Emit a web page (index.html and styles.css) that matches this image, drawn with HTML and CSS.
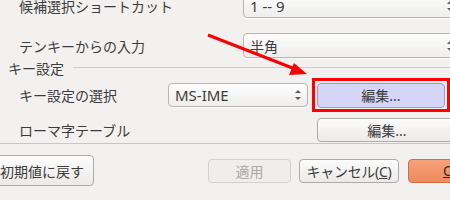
FILE: index.html
```html
<!DOCTYPE html>
<html lang="ja">

<head>
    <meta charset="UTF-8">
    <title>Mozc 設定</title>
    <link rel="stylesheet" href="styles.css">
</head>

<body>
    <div class="prefs">
        <div class="row wide first">
            <span class="label">候補選択ショートカット</span>
            <div class="combo long"><span class="latin">1 -- 9</span><i class="spin"></i></div>
        </div>
        <div class="row wide">
            <span class="label">テンキーからの入力</span>
            <div class="combo long"><span>半角</span><i class="spin"></i></div>
        </div>

        <div class="section-title">
            <span>キー設定</span>
            <div class="rule"></div>
        </div>

        <div class="row keys">
            <span class="label">キー設定の選択</span>
            <div class="combo short"><span class="latin">MS-IME</span><i class="spin"></i></div>
            <div class="highlight">
                <button class="btn hover">編集...</button>
            </div>
        </div>
        <div class="row keys second">
            <span class="label">ローマ字テーブル</span>
            <span></span>
            <button class="btn edit">編集...</button>
        </div>
    </div>

    <div class="footer">
        <button class="btn reset">初期値に戻す</button>
        <button class="btn apply" disabled>適用</button>
        <button class="btn cancel">キャンセル(<u>C</u>)</button>
        <button class="btn ok"><u>O</u>K</button>
    </div>

    <!-- annotation arrow -->
    <svg class="arrow" width="450" height="200" viewBox="0 0 450 200">
        <line x1="208" y1="35" x2="295" y2="69" stroke="#ff0000" stroke-width="3" />
        <polygon points="307,74 289,75 294,63" fill="#ff0000" />
    </svg>
</body>

</html>
```

FILE: styles.css
```css
html,
body {
    margin: 0;
    padding: 0;
}

body {
    width: 450px;
    height: 200px;
    overflow: hidden;
    position: relative;
    background: #f2f1f0;
    font-family: "Noto Sans", "Noto Sans CJK JP", sans-serif;
    font-size: 14px;
    color: #3c3c3c;
}

.prefs {
    height: 150px;
    border-bottom: 1px solid #c9c7c4;
}

.row {
    display: flex;
    align-items: center;
    padding-left: 19px;
}

.row.wide {
    height: 25px;
    margin-top: 15px;
}

.row.wide.first {
    margin-top: -7px;
}

.row.wide .label {
    flex: none;
    width: 224px;
}

.row.keys {
    display: grid;
    grid-template-columns: 145px 140px auto;
    column-gap: 4px;
    align-items: center;
    height: 35px;
}

.row.keys.second {
    height: 24px;
    margin-top: 6px;
}

.label {
    white-space: nowrap;
}

.section-title {
    display: flex;
    align-items: center;
    height: 19px;
    padding-left: 8px;
}

.rule {
    flex: 1;
    margin-left: 9px;
    border-top: 1px solid #cfcdca;
}

.combo {
    position: relative;
    flex: none;
    box-sizing: border-box;
    height: 25px;
    display: flex;
    align-items: center;
    padding-left: 6px;
    border: 1px solid #b8b6b3;
    border-radius: 4px;
    background: linear-gradient(#fdfdfd, #efeeed);
    box-shadow: 0 1px 0 rgba(255, 255, 255, 0.8);
}

.combo .latin {
    font-size: 15px;
}

.combo.long {
    width: 214px;
}

.combo.short {
    width: 140px;
    height: 24px;
}

/* up / down arrows of the combo */
.spin {
    position: absolute;
    right: 9px;
    top: 50%;
    width: 0;
    height: 0;
}

.spin::before,
.spin::after {
    content: "";
    position: absolute;
    left: -3px;
    border-left: 3px solid transparent;
    border-right: 3px solid transparent;
}

.spin::before {
    top: -5px;
    border-bottom: 3px solid #5a5a5a;
}

.spin::after {
    top: 2px;
    border-top: 3px solid #5a5a5a;
}

.combo.long .spin {
    right: 6px;
}

.btn {
    flex: none;
    box-sizing: border-box;
    height: 25px;
    padding: 0 12px;
    border: 1px solid #aeacaa;
    border-radius: 4px;
    background: linear-gradient(#fcfcfc, #ebeae8);
    font-family: inherit;
    font-size: 14px;
    color: #3c3c3c;
    white-space: nowrap;
}

.highlight {
    border: 3px solid #ff0000;
    padding: 2px 0 1px 2px;
    width: 130px;
    display: flex;
}

.btn.hover {
    width: 128px;
    background: #d5d5f7;
    border-color: #9c9bd0;
}

.btn.edit {
    width: 140px;
    height: 24px;
    margin-left: 5px;
}

.footer {
    display: flex;
    align-items: center;
    height: 31px;
    margin-top: 11px;
    margin-left: -13px;
}

.btn.reset {
    width: 107px;
    height: 31px;
    padding: 0 0 0 12px;
    text-align: left;
}

.btn.apply {
    width: 83px;
    height: 24px;
    margin-left: 114px;
    color: #aaa9a7;
    border-color: #d3d1cf;
    background: #efeeec;
}

.btn.cancel {
    width: 100px;
    height: 24px;
    margin-left: 8px;
    padding: 0;
    letter-spacing: -0.3px;
}

.btn.ok {
    width: 80px;
    height: 24px;
    margin-left: 9px;
    text-align: left;
    padding-left: 34px;
    color: #2f2f2f;
    border-color: #c97149;
    background: linear-gradient(#f5a17b, #ef8a5d);
}

.arrow {
    position: absolute;
    left: 0;
    top: 0;
    pointer-events: none;
}
```
